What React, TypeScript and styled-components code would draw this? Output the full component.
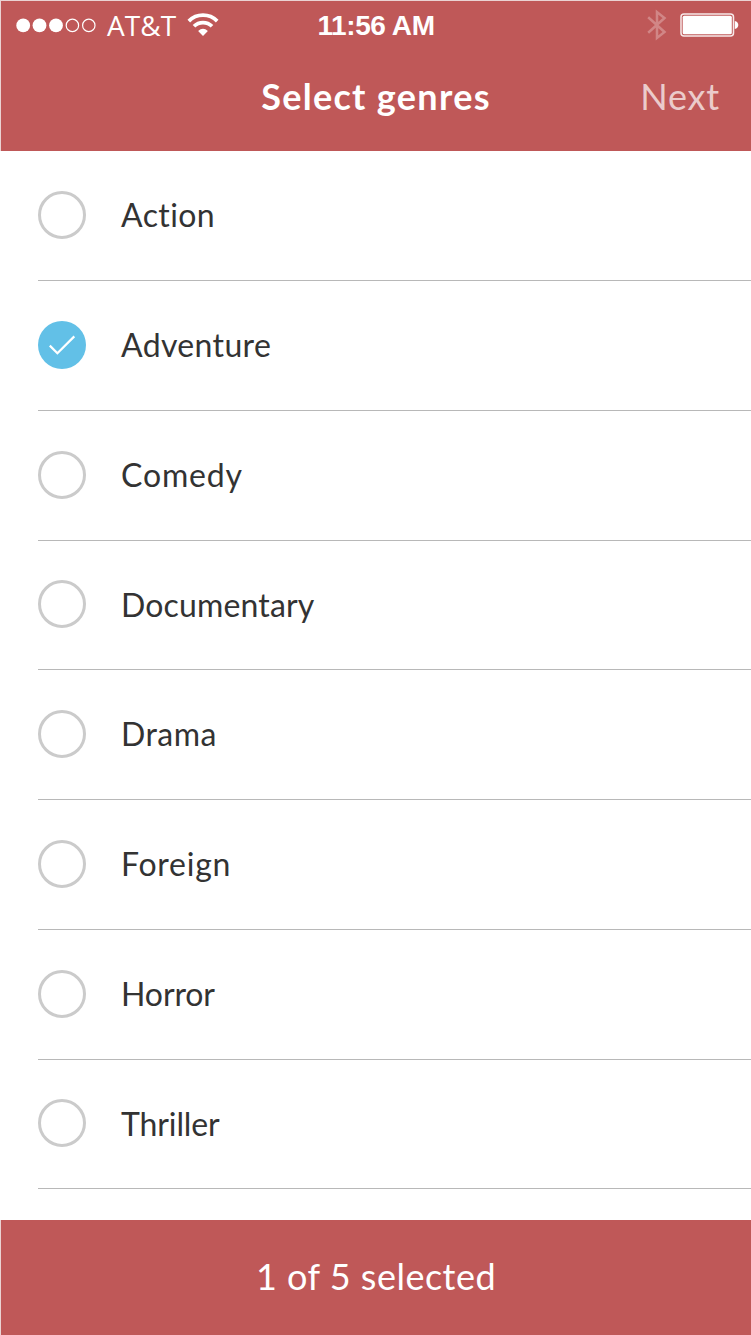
import React, { useState } from "react";
import styled, { createGlobalStyle } from "styled-components";

const GlobalStyle = createGlobalStyle`
  * { box-sizing: border-box; }
  body { margin: 0; background: #fff; }
`;

const brand = "#bf5858";
const edge = "#ead3d3";

const Screen = styled.div`
  width: 751px;
  height: 1335px;
  display: flex;
  flex-direction: column;
  overflow: hidden;
  background: #fff;
  font-family: Lato, "Liberation Sans", sans-serif;
`;

const Header = styled.header`
  flex: none;
  height: 151px;
  background: ${brand};
  border-top: 1px solid ${edge};
  border-left: 1px solid ${edge};
  color: #fff;
`;

const StatusBar = styled.div`
  height: 48px;
  display: grid;
  grid-template-columns: 1fr auto 1fr;
  align-items: center;
  padding: 0 12px 0 15px;
`;

const StatusSide = styled.div<{ $end?: boolean }>`
  display: flex;
  align-items: center;
  justify-content: ${(p) => (p.$end ? "flex-end" : "flex-start")};
  padding-bottom: 1px;
`;

const Carrier = styled.span`
  margin: 0 11px 0 10px;
  padding-bottom: 1px;
  font: 400 28px/46px "Open Sans", sans-serif;
  letter-spacing: 0.1px;
`;

const Clock = styled.time`
  padding-top: 1px;
  margin-right: 3px;
  font: 700 28px/48px "Liberation Sans", sans-serif;
  letter-spacing: -0.4px;
`;

const NavBar = styled.div`
  height: 94px;
  display: grid;
  grid-template-columns: 1fr auto 1fr;
  align-items: center;
  padding: 0 31px;
`;

const Title = styled.h1`
  grid-column: 2;
  margin: 0;
  font-size: 36px;
  font-weight: 700;
  line-height: 94px;
  letter-spacing: 1.3px;
`;

const NextButton = styled.button`
  justify-self: end;
  padding: 0;
  border: 0;
  background: none;
  color: #ebcbcb;
  font: 400 36px/94px Lato, sans-serif;
  letter-spacing: 0.8px;
`;

const List = styled.ul`
  flex: 1;
  min-height: 0;
  margin: 0;
  padding: 0.3px 0 0 38px;
  list-style: none;
`;

const Row = styled.li`
  height: 129.75px;
  display: flex;
  align-items: center;
  gap: 35px;
  border-bottom: 1px solid #b8b8b8;
  cursor: pointer;
`;

const Radio = styled.span<{ $on: boolean }>`
  width: 48px;
  height: 48px;
  flex: none;
  margin-bottom: 1px;
  display: grid;
  place-items: center;
  border-radius: 50%;
  border: ${(p) => (p.$on ? "0" : "3px solid #cbcbcb")};
  background: ${(p) => (p.$on ? "#62c0e7" : "#fff")};
`;

const Label = styled.span<{ $tracking: number }>`
  margin-bottom: 0.4px;
  color: #333;
  font-size: 32px;
  line-height: 40px;
  letter-spacing: ${(p) => p.$tracking}px;
`;

const Footer = styled.footer`
  flex: none;
  height: 115px;
  background: ${brand};
  border-left: 1px solid ${edge};
  color: #fff;
  font-size: 36px;
  line-height: 113px;
  letter-spacing: 0.5px;
  text-align: center;
`;

const SignalDots = () => (
  <svg width="81" height="16" viewBox="0 0 81 16">
    {[7.2, 23.5, 40, 56.4, 72.8].map((x, i) => (
      <circle key={x} cx={x} cy="8.4" r={i < 3 ? 6.9 : 6.2} fill={i < 3 ? "#fff" : "none"} stroke={i < 3 ? "none" : "#fff"} strokeWidth="1.2" />
    ))}
  </svg>
);

const WifiIcon = () => (
  <svg width="32" height="24" viewBox="0 0 32 24">
    <g fill="none" stroke="#fff" strokeWidth="3.7">
      <path d="M1.8 8.1A20 20 0 0 1 30.2 8.1" />
      <path d="M7 13.3A12.7 12.7 0 0 1 25 13.3" />
    </g>
    <path d="M11.1 18Q16 13.6 20.9 18L16 23Z" fill="#fff" />
  </svg>
);

const BluetoothIcon = () => (
  <svg width="20" height="32" viewBox="0 0 20 32" fill="none" stroke="#d18686" strokeWidth="2.5">
    <path d="M1.2 8.3L17.5 23L10 29V3L17.5 9L1.2 23.7" />
  </svg>
);

const Battery = styled.svg`
  margin-left: 13px;
`;

const BatteryIcon = () => (
  <Battery width="59" height="24" viewBox="0 0 59 24">
    <rect x="1" y="1" width="52.5" height="22" rx="3" fill="none" stroke="#f7e9e9" strokeWidth="1.5" />
    <rect x="2.7" y="2.7" width="49.1" height="18.6" rx="1.5" fill="#fff" />
    <path d="M54.8 8C59.5 9 59.5 15 54.8 16Z" fill="#fff" />
  </Battery>
);

const CheckIcon = () => (
  <svg width="48" height="48" viewBox="0 0 48 48" fill="none" stroke="#fff" strokeWidth="2.2">
    <path d="M11.8 24.6L19.4 32.2L36.3 15.4" />
  </svg>
);

const genres = [
  { name: "Action", tracking: 0.4 },
  { name: "Adventure", tracking: 0.35 },
  { name: "Comedy", tracking: 0.85 },
  { name: "Documentary", tracking: 0.15 },
  { name: "Drama", tracking: 0.45 },
  { name: "Foreign", tracking: 0.75 },
  { name: "Horror", tracking: -0.1 },
  { name: "Thriller", tracking: -0.1 },
];

export default function App() {
  const [selected, setSelected] = useState<string[]>(["Adventure"]);
  const toggle = (name: string) =>
    setSelected((s) => (s.includes(name) ? s.filter((n) => n !== name) : s.length < 5 ? [...s, name] : s));

  return (
    <Screen>
      <GlobalStyle />
      <Header>
        <StatusBar>
          <StatusSide>
            <SignalDots />
            <Carrier>AT&amp;T</Carrier>
            <WifiIcon />
          </StatusSide>
          <Clock>11:56 AM</Clock>
          <StatusSide $end>
            <BluetoothIcon />
            <BatteryIcon />
          </StatusSide>
        </StatusBar>
        <NavBar>
          <Title>Select genres</Title>
          <NextButton>Next</NextButton>
        </NavBar>
      </Header>
      <List>
        {genres.map(({ name, tracking }) => {
          const on = selected.includes(name);
          return (
            <Row key={name} onClick={() => toggle(name)}>
              <Radio $on={on}>{on && <CheckIcon />}</Radio>
              <Label $tracking={tracking}>{name}</Label>
            </Row>
          );
        })}
      </List>
      <Footer>{selected.length} of 5 selected</Footer>
    </Screen>
  );
}
